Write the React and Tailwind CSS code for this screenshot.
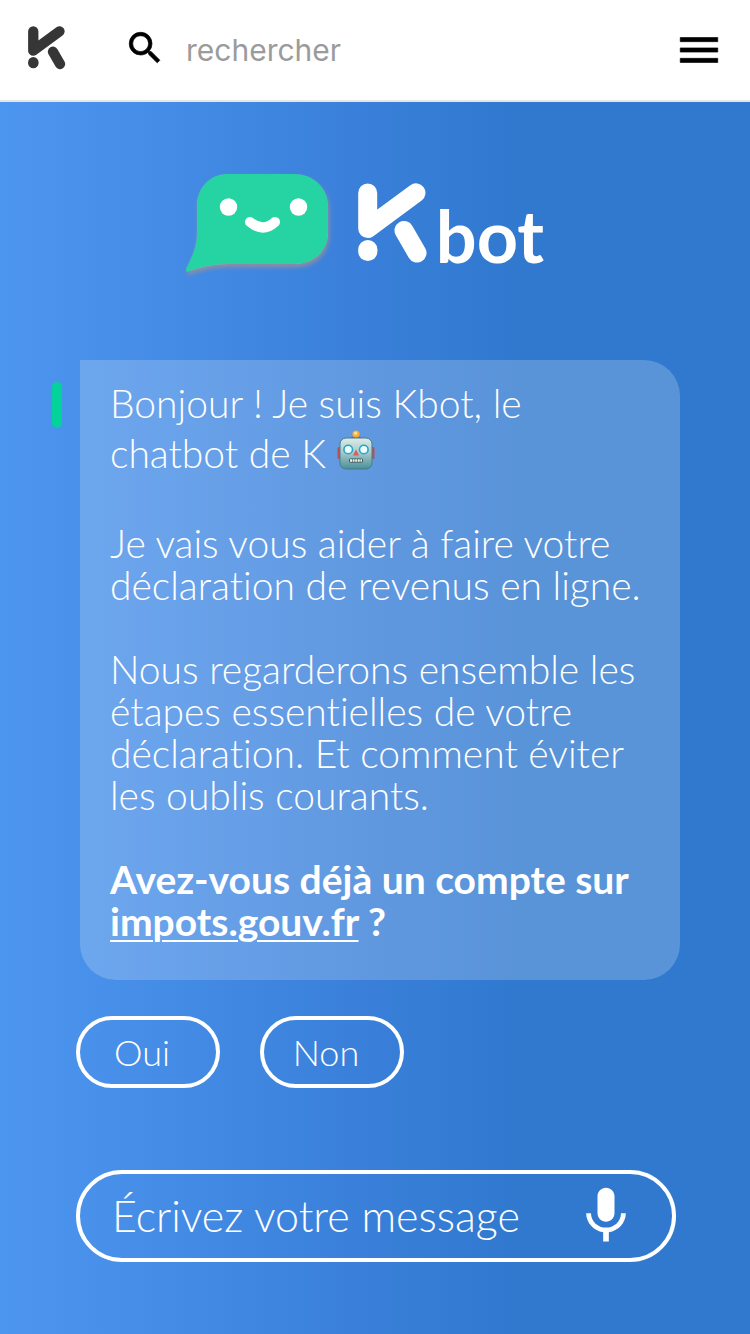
import React, { useState } from 'react'
import { MdSearch, MdMenu, MdMic } from 'react-icons/md'

const ANSWERS = ['Oui', 'Non']

function KMark({ className }) {
  return (
    <svg viewBox="0 0 70 80" className={className} fill="none" stroke="currentColor" strokeWidth="19" strokeLinecap="round" strokeLinejoin="round" aria-hidden="true">
      <path d="M9.7 10V45.5L58 9.8" />
      <path d="M46 47.5L59 70" />
      <rect x="0.2" y="57" width="19.2" height="21" rx="9.6" fill="currentColor" stroke="none" />
    </svg>
  )
}

function BotFace() {
  return (
    <svg viewBox="0 0 160 116" className="w-40 shrink-0" aria-hidden="true">
      <defs>
        <filter id="botShadow" x="-10%" y="-10%" width="120%" height="125%">
          <feDropShadow dx="1" dy="3" stdDeviation="2.2" floodColor="#9a8f9a" floodOpacity="0.9" />
        </filter>
      </defs>
      <path filter="url(#botShadow)" fill="#28d3a2" d="M49 10H117C135 10 150 24 150 42V69C150 87 135 100 117 100H50C36 100 22 103 10 107.5Q7 107.5 8.5 104C15 91 19 82 19 69V42C19 24 32 10 49 10Z" />
      <circle cx="50.5" cy="43" r="8.7" fill="#fff" />
      <circle cx="120.5" cy="43" r="8.7" fill="#fff" />
      <path d="M72 58Q85 69 97 58" fill="none" stroke="#fff" strokeWidth="10" strokeLinecap="round" />
    </svg>
  )
}

function Robot() {
  return (
    <svg viewBox="0 0 38 40" className="inline-block w-[38px] h-10 align-[-2px]" role="img" aria-label="robot">
      <defs>
        <linearGradient id="robotHead" x1="0" y1="0" x2="0" y2="1">
          <stop offset="0" stopColor="#dcebe8" />
          <stop offset="0.45" stopColor="#a9cccd" />
          <stop offset="1" stopColor="#4a8f98" />
        </linearGradient>
      </defs>
      <path d="M14 8C14 5 24 5 24 8L22 10H16Z" fill="#75659b" />
      <circle cx="19" cy="4.2" r="3.6" fill="#f6a93c" />
      <circle cx="18.6" cy="3.2" r="1.7" fill="#ffe08a" />
      <rect x="0.5" y="17" width="4" height="12" rx="1.5" fill="#b8505c" />
      <rect x="33.5" y="17" width="4" height="12" rx="1.5" fill="#b8505c" />
      <rect x="3" y="8" width="32" height="31" rx="6" fill="url(#robotHead)" stroke="#477d86" strokeWidth="1" />
      <circle cx="11.2" cy="19.5" r="4.3" fill="#e9fcff" stroke="#2aa5c0" strokeWidth="1.6" />
      <circle cx="26.8" cy="19.5" r="4.3" fill="#e9fcff" stroke="#2aa5c0" strokeWidth="1.6" />
      <path d="M19 19.5L22 25.5H16Z" fill="#dc5a5a" />
      <rect x="12" y="28.5" width="14" height="4" rx="1.5" fill="#3d4f55" />
      <path d="M13 30.5H25" stroke="#f3f3ee" strokeWidth="2.6" strokeDasharray="2 0.6" />
    </svg>
  )
}

export default function App() {
  const [query, setQuery] = useState('')
  const [message, setMessage] = useState('')

  return (
    <div className="min-h-screen flex flex-col text-white font-['Lato',sans-serif]">
      <header className="h-[102px] flex items-center bg-white border-b-2 border-[#e6e6e6] pl-7 pr-[26px] text-black">
        <a href="#" aria-label="Accueil" className="shrink-0 pb-1">
          <KMark className="w-[38px] text-[#363636]" />
        </a>
        <label className="flex flex-1 items-center gap-5 ml-[58px]">
          <MdSearch size={42} className="shrink-0 mb-1 [&>path:first-child]:stroke-none" strokeWidth="0.4" aria-hidden="true" />
          <input
            type="search"
            aria-label="rechercher"
            value={query}
            onChange={e => setQuery(e.target.value)}
            placeholder="rechercher"
            className="w-full font-['Inter',sans-serif] text-[30px] text-gray-700 placeholder:text-[#9b9b9b] outline-none"
          />
        </label>
        <button type="button" aria-label="Menu">
          <MdMenu size={50} className="[&>path:first-child]:stroke-none" strokeWidth="0.3" />
        </button>
      </header>

      <main className="flex-1 pt-[62px] pb-[72px] bg-[linear-gradient(90deg,#4d96ef_0%,#397fd9_50%,#3079cf_69%)]">
        {/* Logo */}
        <h1 className="flex justify-center items-start gap-5 pr-7" aria-label="Kbot">
          <BotFace />
          <span className="flex items-baseline gap-2 mt-[19px]">
            <KMark className="w-[70px]" />
            <span className="text-[72px] leading-none font-bold">bot</span>
          </span>
        </h1>

        {/* Conversation */}
        <section className="flex items-start gap-[18px] mt-20 pl-[52px] pr-[70px]">
          <span className="w-[10px] h-[46px] mt-[22px] shrink-0 rounded-full bg-[#03d29a]" />
          <div className="flex-1 flex flex-col gap-[42px] pt-[18px] pb-[38px] px-[30px] rounded-[36px] rounded-tl-none bg-white/20 text-[39px] leading-[42px] font-light [font-variant-ligatures:none]">
            <p className="leading-[50px] pb-0.5">
              Bonjour ! Je suis Kbot, le chatbot de K <Robot />
            </p>
            <p>Je vais vous aider à faire votre déclaration de revenus en ligne.</p>
            <p>
              Nous regarderons ensemble les étapes essentielles de votre déclaration. Et comment éviter les oublis courants.
            </p>
            <p className="font-bold">
              Avez-vous déjà un compte sur{' '}
              <a href="#" className="underline decoration-2 underline-offset-4">impots.gouv.fr</a> ?
            </p>
          </div>
        </section>

        {/* Quick answers */}
        <div className="flex gap-10 mt-9 pl-[76px]">
          {ANSWERS.map(a => (
            <button
              key={a}
              type="button"
              onClick={() => setMessage(a)}
              className="w-36 h-[72px] pr-3 rounded-full border-4 border-white text-4xl font-light"
            >
              {a}
            </button>
          ))}
        </div>

        <form onSubmit={e => e.preventDefault()} className="pl-[76px] pr-[74px] mt-[82px]">
          <div className="flex items-center h-[92px] px-8 rounded-full border-4 border-white">
            <input
              aria-label="Écrivez votre message"
              value={message}
              onChange={e => setMessage(e.target.value)}
              placeholder="Écrivez votre message"
              className="flex-1 min-w-0 text-[43px] font-light placeholder:text-white outline-none"
            />
            <button type="button" aria-label="Dicter">
              <MdMic size={68} />
            </button>
          </div>
        </form>
      </main>
    </div>
  )
}
